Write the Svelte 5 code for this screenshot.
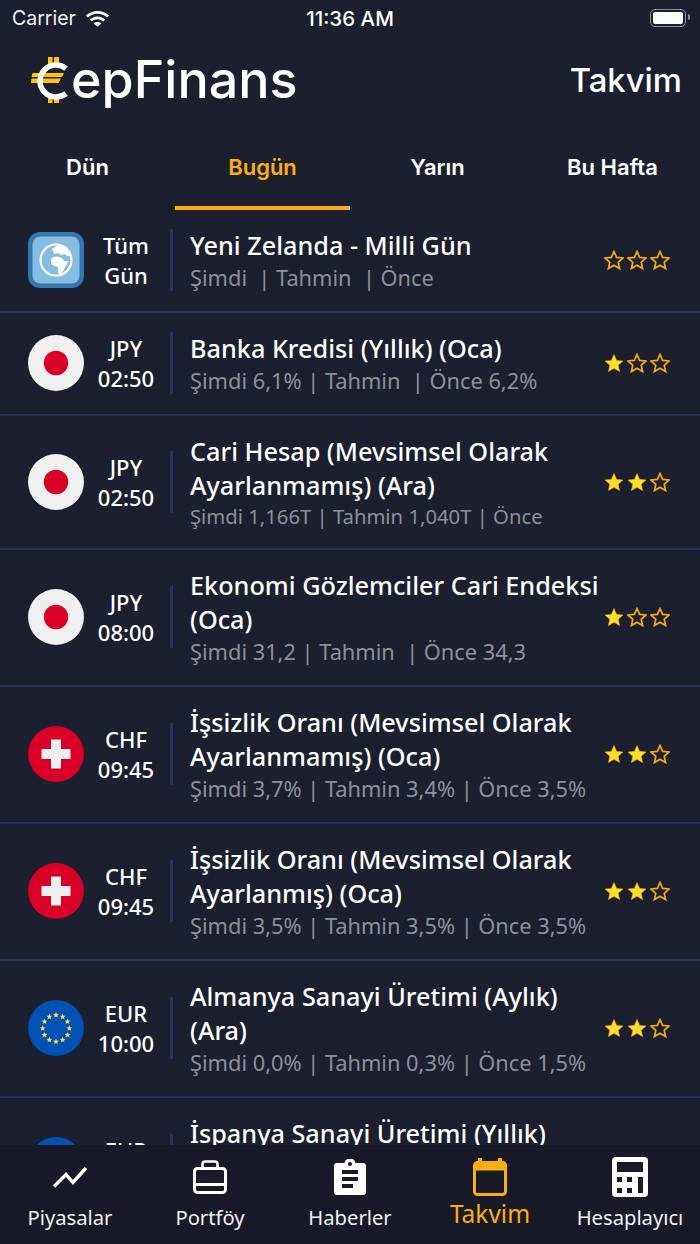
<script lang="ts">
	interface Row {
		flag: 'globe' | 'jp' | 'ch' | 'eu';
		top: string;
		bottom: string;
		title: string;
		sub: string;
		stars: number;
		tight?: boolean;
	}

	const rows: Row[] = [
		{ flag: 'globe', top: 'Tüm', bottom: 'Gün', title: 'Yeni Zelanda - Milli Gün', sub: 'Şimdi  | Tahmin  | Önce', stars: 0 },
		{ flag: 'jp', top: 'JPY', bottom: '02:50', title: 'Banka Kredisi (Yıllık) (Oca)', sub: 'Şimdi 6,1% | Tahmin  | Önce 6,2%', stars: 1 },
		{ flag: 'jp', top: 'JPY', bottom: '02:50', title: 'Cari Hesap (Mevsimsel Olarak Ayarlanmamış) (Ara)', sub: 'Şimdi 1,166T | Tahmin 1,040T | Önce', stars: 2, tight: true },
		{ flag: 'jp', top: 'JPY', bottom: '08:00', title: 'Ekonomi Gözlemciler Cari Endeksi (Oca)', sub: 'Şimdi 31,2 | Tahmin  | Önce 34,3', stars: 1 },
		{ flag: 'ch', top: 'CHF', bottom: '09:45', title: 'İşsizlik Oranı (Mevsimsel Olarak Ayarlanmamış) (Oca)', sub: 'Şimdi 3,7% | Tahmin 3,4% | Önce 3,5%', stars: 2 },
		{ flag: 'ch', top: 'CHF', bottom: '09:45', title: 'İşsizlik Oranı (Mevsimsel Olarak Ayarlanmış) (Oca)', sub: 'Şimdi 3,5% | Tahmin 3,5% | Önce 3,5%', stars: 2 },
		{ flag: 'eu', top: 'EUR', bottom: '10:00', title: 'Almanya Sanayi Üretimi (Aylık) (Ara)', sub: 'Şimdi 0,0% | Tahmin 0,3% | Önce 1,5%', stars: 2 },
		{ flag: 'eu', top: 'EUR', bottom: '10:00', title: 'İspanya Sanayi Üretimi (Yıllık) (Ara)', sub: 'Şimdi 1,5% | Tahmin 1,0% | Önce 1,8%', stars: 2 }
	];

	const tabs = ['Dün', 'Bugün', 'Yarın', 'Bu Hafta'];
	const starPts = '10,1.5 12.6,7.4 19,8 14.2,12.3 15.6,18.6 10,15.3 4.4,18.6 5.8,12.3 1,8 7.4,7.4';

	// twelve stars round the EU flag
	const euStars = Array.from({ length: 12 }, (_, i) => {
		const a = (i * Math.PI) / 6;
		return { x: 28 + 13.3 * Math.sin(a) - 3.2, y: 28 - 13.3 * Math.cos(a) - 3.2 };
	});
</script>

<div class="screen">
	<div class="status">
		<div class="status-left">
			<span>Carrier</span>
			<svg width="25" height="18" viewBox="0 0 26 18">
				<path d="M1 6.500C8 .2 18 .2 25 6.500l-2 2.100C17 3.400 9 3.400 3 8.600z" fill="#fff" />
				<path d="M5 10.600c4.700-4.200 11.300-4.200 16 0l-2 2.100c-3.600-3.100-8.400-3.100-12 0z" fill="#fff" />
				<path d="M9 14.600c2.400-2 5.600-2 8 0L13 18.200z" fill="#fff" />
			</svg>
		</div>
		<span class="clock">11:36 AM</span>
		<div class="battery"><div class="cell"></div><div class="nub"></div></div>
	</div>

	<header class="top">
		<div class="logo">
			<svg width="40" height="50" viewBox="0 0 40 50">
				<path d="M18 2h4.500v7H18zM24 2h5v7h-5zM18 42h4.500v6H18zM24 42h5v6h-5z" fill="#fdc30f" />
				<path d="M2.500 18H34l-2 4H1.500zM1.500 23.500H31l-2.500 4.500H1z" fill="#fdc30f" />
				<path d="M36 13.500A16 16 0 1 0 36 38.500" fill="none" stroke="#fff" stroke-width="5.500" />
			</svg>
			<span class="word">epFinans</span>
		</div>
		<span class="page">Takvim</span>
	</header>

	<nav class="tabs">
		{#each tabs as tab, i (tab)}
			<div class="tab" class:active={i === 1}>{tab}</div>
		{/each}
	</nav>

	<div class="list">
		{#each rows as row, r (r)}
			<div class="row">
				<div class="flag">
					<svg width="56" height="56" viewBox="0 0 56 56">
						{#if row.flag === 'globe'}
							<rect width="56" height="56" rx="12" fill="#3378b0" />
							<rect x="4.500" y="4.500" width="47" height="47" rx="8" fill="#86bcdf" />
							<circle cx="28" cy="28" r="15.500" fill="none" stroke="#fff" stroke-width="2.200" />
							<path d="M23 27C25 24 29 24 31 25L34 26 36 29 40 29C39 33 37 35 36 37 35 40 33 42 32 42 30 42 30 38 30 35 28 34 24 34 23 31Z" fill="#fff" />
							<path d="M24 17C28 13 34 12 38 15 41 17 43 20 43 24L39 24 37 22 33 23 30 21 26 22Z" fill="#fff" />
						{:else if row.flag === 'jp'}
							<circle cx="28" cy="28" r="28" fill="#f0f0f0" />
							<circle cx="28" cy="28" r="12.200" fill="#d80027" />
						{:else if row.flag === 'ch'}
							<circle cx="28" cy="28" r="28" fill="#d80027" />
							<path d="M23 13.500h10V23h9.500v10H33v9.500H23V33h-9.500V23H23z" fill="#f0f0f0" />
						{:else}
							<circle cx="28" cy="28" r="28" fill="#0052b4" />
							{#each euStars as s, i (i)}
								<polygon points={starPts} fill="#ffda44" transform="translate({s.x} {s.y}) scale(0.32)" />
							{/each}
						{/if}
					</svg>
				</div>
				<div class="when">
					<span>{row.top}</span>
					<span>{row.bottom}</span>
				</div>
				<div class="rule"></div>
				<div class="body">
					<div class="title">{row.title}</div>
					<div class="sub" class:tight={row.tight}>{row.sub}</div>
				</div>
				<div class="stars">
					{#each [0, 1, 2] as n (n)}
						<svg width="20" height="20" viewBox="0 0 20 20">
							{#if n < row.stars}
								<polygon points={starPts} fill="#ffdf2b" stroke="#f5a81c" stroke-width="0.6" />
							{:else}
								<polygon points={starPts} fill="none" stroke="#f5a81c" stroke-width="1.700" />
							{/if}
						</svg>
					{/each}
				</div>
			</div>
		{/each}
	</div>

	<footer class="bar">
		<div class="item">
			<div class="ico">
				<svg width="36" height="24" viewBox="0 0 36 24">
					<path d="M2 21.500l12-12 7 8L34 3" fill="none" stroke="#fff" stroke-width="3.400" />
				</svg>
			</div>
			<span>Piyasalar</span>
		</div>
		<div class="item">
			<div class="ico">
				<svg width="34" height="34" viewBox="0 0 34 34">
					<path d="M9.500 9V4a2.500 2.500 0 0 1 2.500-2.500h10A2.500 2.500 0 0 1 24.500 4v5" fill="none" stroke="#fff" stroke-width="2.600" />
					<rect x="1.500" y="8.500" width="31" height="24" rx="3" fill="none" stroke="#fff" stroke-width="3" />
					<path d="M1.500 24.500h31" stroke="#fff" stroke-width="3" />
				</svg>
			</div>
			<span>Portföy</span>
		</div>
		<div class="item">
			<div class="ico">
				<svg width="32" height="36" viewBox="0 0 32 36">
					<path fill-rule="evenodd" fill="#fff" d="M3 4h7.500a5.600 5.600 0 0 1 11 0H29a3 3 0 0 1 3 3v26a3 3 0 0 1-3 3H3a3 3 0 0 1-3-3V7a3 3 0 0 1 3-3zM16 3a2 2 0 1 0 0 4 2 2 0 0 0 0-4zM8 11v4h16v-4zM8 18v4h16v-4zM8 25v4h11v-4z" />
				</svg>
			</div>
			<span>Haberler</span>
		</div>
		<div class="item on">
			<div class="ico">
				<svg width="34" height="38" viewBox="0 0 34 38">
					<rect x="5" y="0" width="4" height="6" fill="#fcae14" />
					<rect x="25" y="0" width="4" height="6" fill="#fcae14" />
					<rect x="1.500" y="4.500" width="31" height="32" rx="3" fill="none" stroke="#fcae14" stroke-width="3" />
					<rect x="1.500" y="4.500" width="31" height="8" fill="#fcae14" />
				</svg>
			</div>
			<span>Takvim</span>
		</div>
		<div class="item">
			<div class="ico">
				<svg width="36" height="40" viewBox="0 0 36 40">
					<path fill-rule="evenodd" fill="#fff" d="M4 0h28a4 4 0 0 1 4 4v32a4 4 0 0 1-4 4H4a4 4 0 0 1-4-4V4a4 4 0 0 1 4-4zM5 5v10h26V5zM5 20v5h5v-5zM15 20v5h5v-5zM26 20v16h5V20zM5 31v5h5v-5zM15 31v5h5v-5z" />
				</svg>
			</div>
			<span>Hesaplayıcı</span>
		</div>
	</footer>
</div>

<style>
	:global(body) {
		background: #1c1f2e;
	}

	.screen {
		width: 700px;
		height: 1244px;
		display: flex;
		flex-direction: column;
		overflow: hidden;
		background: #1c1f2e;
		color: #fff;
		font-family: 'Noto Sans', sans-serif;
	}

	.status {
		height: 36px;
		flex: none;
		display: grid;
		grid-template-columns: 1fr auto 1fr;
		align-items: center;
		padding: 0 10px 0 12px;
		font-family: Inter, sans-serif;
		font-size: 19.500px;
	}

	.status-left {
		display: flex;
		align-items: center;
		gap: 9px;
		color: #f2f2f2;
	}

	.clock {
		font-size: 20.500px;
		font-weight: 500;
		margin-right: 2px;
	}

	.battery {
		position: relative;
		justify-self: end;
		width: 36px;
		height: 18px;
		margin-right: 4px;
		padding: 2px;
		box-sizing: border-box;
		border: 1.500px solid #8a8c96;
		border-radius: 5px;
		display: flex;
	}

	.cell {
		flex: 1;
		background: #fff;
		border-radius: 2px;
	}

	.nub {
		position: absolute;
		right: -5px;
		top: 4px;
		width: 2px;
		height: 6px;
		background: #8a8c96;
		border-radius: 0 2px 2px 0;
	}

	.top {
		height: 92px;
		flex: none;
		box-sizing: border-box;
		display: flex;
		align-items: center;
		justify-content: space-between;
		padding: 0 18px 4px 30px;
	}

	.logo {
		display: flex;
		align-items: center;
	}

	.word {
		margin-left: 1px;
		font-family: Inter, sans-serif;
		font-size: 52px;
		line-height: 50px;
		font-weight: 500;
	}

	.page {
		font-family: Inter, sans-serif;
		font-size: 32.800px;
		font-weight: 500;
	}

	.tabs {
		height: 82px;
		flex: none;
		box-sizing: border-box;
		display: grid;
		grid-template-columns: repeat(4, 1fr);
	}

	.tab {
		display: flex;
		align-items: center;
		justify-content: center;
		font-family: Inter, sans-serif;
		font-size: 22px;
		font-weight: 600;
		border-bottom: 4px solid transparent;
	}

	.tab.active {
		color: #fcae14;
		border-bottom-color: #fcae14;
	}

	.list {
		flex: 1;
		min-height: 0;
		overflow: hidden;
	}

	.row {
		display: flex;
		align-items: center;
		padding: 17px 30px 18px 28px;
		border-bottom: 2px solid #2b2f63;
	}

	.flag {
		flex: none;
		width: 56px;
		height: 56px;
	}

	.when {
		flex: none;
		width: 84px;
		margin-right: 2px;
		display: flex;
		flex-direction: column;
		align-items: center;
		font-size: 22px;
		line-height: 30px;
		font-weight: 500;
	}

	.rule {
		flex: none;
		width: 3px;
		height: 62px;
		background: #2b2f63;
		margin-right: 17px;
	}

	.body {
		flex: 1;
		min-width: 0;
		padding-top: 1px;
		margin-bottom: -1px;
	}

	.title {
		font-size: 25.250px;
		line-height: 34px;
		font-weight: 500;
	}

	.sub {
		font-size: 21.800px;
		line-height: 32px;
		color: #8d8f98;
		white-space: pre;
	}

	.sub.tight {
		font-size: 20.250px;
		line-height: 29px;
	}

	.stars {
		flex: none;
		display: flex;
		gap: 3px;
		margin-left: 4px;
	}

	.bar {
		height: 99px;
		flex: none;
		display: grid;
		grid-template-columns: repeat(5, 1fr);
		background: #181a27;
	}

	.item {
		display: flex;
		flex-direction: column;
		align-items: center;
		padding-top: 11px;
		font-size: 20.200px;
		line-height: 28px;
		color: #f2f2f2;
	}

	.ico {
		height: 42px;
		margin-bottom: 5px;
		display: flex;
		align-items: center;
		justify-content: center;
	}

	.item.on {
		color: #fcae14;
		font-size: 24.500px;
	}

	.item.on .ico {
		margin-bottom: 2px;
	}
</style>
